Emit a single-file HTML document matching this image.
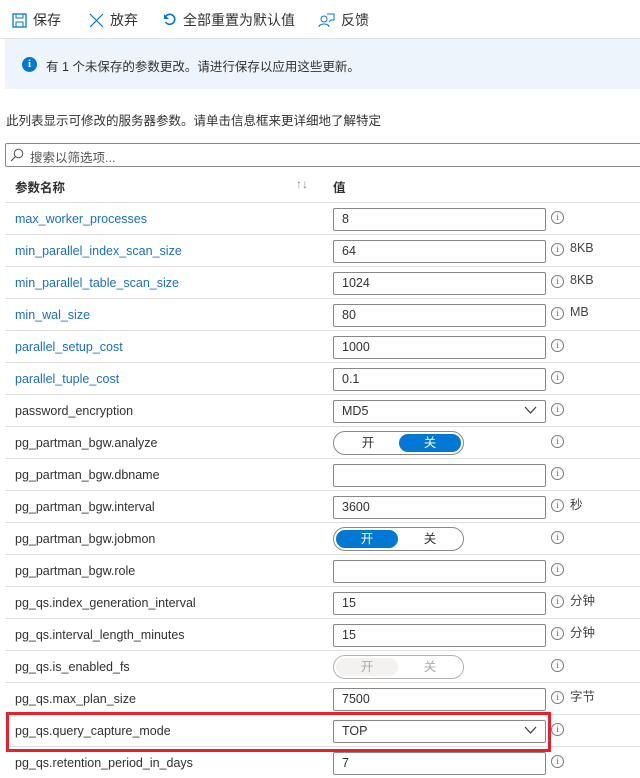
<!DOCTYPE html>
<html><head><meta charset="utf-8"><style>
*{box-sizing:border-box;margin:0;padding:0}
body{width:640px;height:778px;overflow:hidden;background:#fff;font-family:"Liberation Sans","Noto Sans CJK SC",sans-serif;font-size:13px;color:#323130;position:relative}
.abs{position:absolute}
.tb{top:10px;font-size:14px;display:flex;align-items:center;gap:6px;height:20px}
.banner{left:5px;top:39px;width:640px;height:50px;background:#eef4fb}
.row{position:absolute;left:5px;width:640px;height:32px;border-top:1px solid #e1dfdd}
.name{position:absolute;left:10px;top:9px;font-size:12.5px}
.lnk{color:#1b6ec2}
.inp{position:absolute;left:328px;top:5px;width:213px;height:23px;border:1px solid #8a8886;border-radius:2px;padding-left:8px;line-height:21px;font-size:12.5px}
.info{position:absolute;left:546px;top:8px;width:13px;height:13px;border:1px solid #777;border-radius:50%;font-size:9px;line-height:11px;text-align:center;color:#666;font-family:"Liberation Serif",serif}
.unit{position:absolute;left:565px;top:6px;font-size:12.5px;color:#444}
.cj{top:3px}
.tog{position:absolute;left:328px;top:4px;width:131px;height:24px;border:1px solid #8a8886;border-radius:12px}
.tog span{position:absolute;top:2px;width:62px;height:18px;border-radius:9px;text-align:center;line-height:18px;font-size:12.5px}
.chev{position:absolute;right:8px;top:5px}
</style></head><body>
<div class="abs tb" style="left:12px"><svg width="15" height="15" viewBox="0 0 15 15"><rect x="1" y="1" width="13" height="13" fill="none" stroke="#0078d4" stroke-width="1.3"/><rect x="4" y="1" width="7" height="4" fill="none" stroke="#0078d4"/><rect x="4" y="9" width="7" height="5" fill="none" stroke="#0078d4"/></svg>保存</div>
<div class="abs tb" style="left:89px"><svg width="15" height="15" viewBox="0 0 15 15"><path d="M1 1L14 14M14 1L1 14" stroke="#0078d4" stroke-width="1.2"/></svg>放弃</div>
<div class="abs tb" style="left:163px"><svg width="14" height="14" viewBox="0 0 14 14"><path d="M3 3A5 5 0 1 1 2.5 9" fill="none" stroke="#0078d4" stroke-width="1.6"/><path d="M1 1L1 6L6 6Z" fill="#0078d4"/></svg>全部重置为默认值</div>
<div class="abs tb" style="left:318px"><svg width="17" height="16" viewBox="0 0 17 16"><circle cx="6" cy="7" r="3" fill="none" stroke="#0078d4"/><path d="M1 15C1 11 11 11 11 15" fill="none" stroke="#0078d4"/><path d="M9 2H16V8H13L11 10" fill="none" stroke="#0078d4"/></svg>反馈</div>
<div class="abs" style="left:0;top:38px;width:640px;height:1px;background:#e1dfdd"></div>
<div class="abs banner"></div>
<div class="abs" style="left:22px;top:57px;width:15px;height:15px;border-radius:50%;background:#0078d4;color:#fff;font-size:11px;font-weight:bold;text-align:center;line-height:15px;font-family:'Liberation Serif',serif">i</div>
<div class="abs" style="left:46px;top:56px;font-size:12.5px">有 1 个未保存的参数更改。请进行保存以应用这些更新。</div>
<div class="abs" style="left:6px;top:110px;font-size:12.5px;white-space:nowrap">此列表显示可修改的服务器参数。请单击信息框来更详细地了解特定</div>
<div class="abs" style="left:5px;top:143px;width:640px;height:24px;border:1px solid #8a8886;border-radius:2px"></div>
<svg class="abs" style="left:10px;top:148px" width="14" height="14" viewBox="0 0 14 14"><circle cx="8.5" cy="5.5" r="4.3" fill="none" stroke="#555"/><path d="M5.5 8.5L1 13" stroke="#555" stroke-width="1.2"/></svg>
<div class="abs" style="left:30px;top:147px;font-size:12.5px;color:#555">搜索以筛选项...</div>
<div class="abs" style="left:15px;top:177px;font-weight:bold;font-size:12.5px">参数名称</div>
<div class="abs" style="left:296px;top:177px;font-size:12px;color:#888">↑↓</div>
<div class="abs" style="left:333px;top:177px;font-weight:bold;font-size:12.5px">值</div>

<div class="row" style="top:202px"><div class="name lnk">max_worker_processes</div><div class="inp">8</div><div class="info">i</div></div>
<div class="row" style="top:234px"><div class="name lnk">min_parallel_index_scan_size</div><div class="inp">64</div><div class="info">i</div><div class="unit">8KB</div></div>
<div class="row" style="top:266px"><div class="name lnk">min_parallel_table_scan_size</div><div class="inp">1024</div><div class="info">i</div><div class="unit">8KB</div></div>
<div class="row" style="top:298px"><div class="name lnk">min_wal_size</div><div class="inp">80</div><div class="info">i</div><div class="unit">MB</div></div>
<div class="row" style="top:330px"><div class="name lnk">parallel_setup_cost</div><div class="inp">1000</div><div class="info">i</div></div>
<div class="row" style="top:362px"><div class="name lnk">parallel_tuple_cost</div><div class="inp">0.1</div><div class="info">i</div></div>
<div class="row" style="top:394px"><div class="name">password_encryption</div><div class="inp">MD5<svg class="chev" width="13" height="9" viewBox="0 0 13 9"><path d="M1 1L6.5 7L12 1" fill="none" stroke="#333" stroke-width="1.1"/></svg></div><div class="info">i</div></div>
<div class="row" style="top:426px"><div class="name">pg_partman_bgw.analyze</div><div class="tog"><span style="left:3px">开</span><span style="left:65px;background:#0078d4;color:#fff">关</span></div><div class="info">i</div></div>
<div class="row" style="top:458px"><div class="name">pg_partman_bgw.dbname</div><div class="inp"></div><div class="info">i</div></div>
<div class="row" style="top:490px"><div class="name">pg_partman_bgw.interval</div><div class="inp">3600</div><div class="info">i</div><div class="unit cj">秒</div></div>
<div class="row" style="top:522px"><div class="name">pg_partman_bgw.jobmon</div><div class="tog"><span style="left:2px;background:#0078d4;color:#fff">开</span><span style="left:65px">关</span></div><div class="info">i</div></div>
<div class="row" style="top:554px"><div class="name">pg_partman_bgw.role</div><div class="inp"></div><div class="info">i</div></div>
<div class="row" style="top:586px"><div class="name">pg_qs.index_generation_interval</div><div class="inp">15</div><div class="info">i</div><div class="unit cj">分钟</div></div>
<div class="row" style="top:618px"><div class="name">pg_qs.interval_length_minutes</div><div class="inp">15</div><div class="info">i</div><div class="unit cj">分钟</div></div>
<div class="row" style="top:650px"><div class="name">pg_qs.is_enabled_fs</div><div class="tog" style="border-color:#b3b0ad"><span style="left:2px;background:#f3f2f1;color:#aaa">开</span><span style="left:65px;color:#aaa">关</span></div><div class="info">i</div></div>
<div class="row" style="top:682px"><div class="name">pg_qs.max_plan_size</div><div class="inp">7500</div><div class="info">i</div><div class="unit cj">字节</div></div>
<div class="row" style="top:714px"><div class="name">pg_qs.query_capture_mode</div><div class="inp">TOP<svg class="chev" width="13" height="9" viewBox="0 0 13 9"><path d="M1 1L6.5 7L12 1" fill="none" stroke="#333" stroke-width="1.1"/></svg></div><div class="info">i</div></div>
<div class="row" style="top:746px"><div class="name">pg_qs.retention_period_in_days</div><div class="inp">7</div><div class="info">i</div></div>
<div class="abs" style="left:6px;top:712px;width:545px;height:40px;border:3px solid #e8202a"></div>
</body></html>
